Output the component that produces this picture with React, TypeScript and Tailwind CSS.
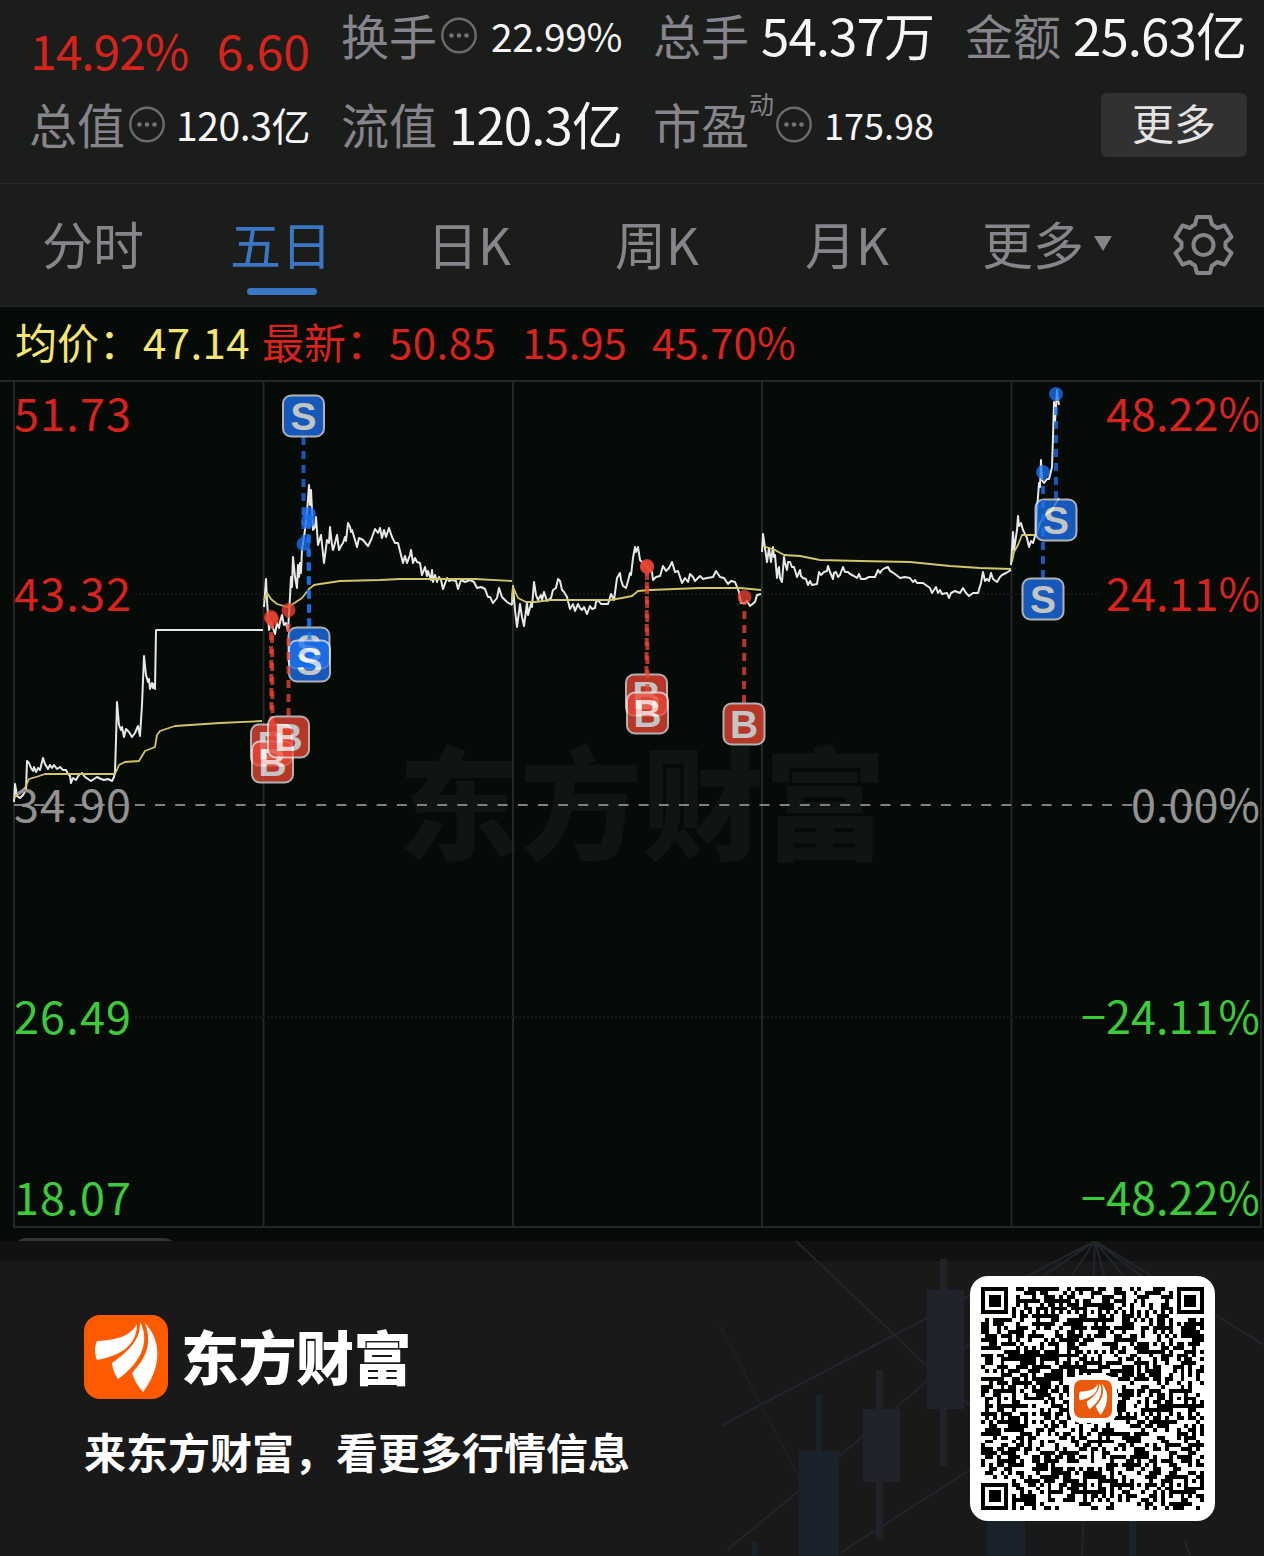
/**
 * Stock detail share card: quote header, period tabs, five-day price chart
 * with buy / sell marks, and the brand footer with a QR code.
 */

import React from 'react';

type Tone = 'blue' | 'red';

interface TradeMark {
  x: number;
  y: number;
  dotX: number;
  dotY: number;
  tone: Tone;
}

const TONES: Record<Tone, { fill: string; letter: string }> = {
  blue: { fill: '#1b72f2', letter: 'S' },
  red: { fill: '#ee4433', letter: 'B' },
};

const PRICE_LINES = [
  '14,802 15,784 17,796 20,798 23,795 26,790 27,761 29,763 31,768 33,771 34,767 36,772 38,768 40,770 43,758 45,764 48,769 50,765 52,768 54,765 57,769 60,767 63,770 66,770 68,774 70,776 71,783 73,778 76,780 79,775 82,773 85,777 88,779 91,781 94,779 97,777 101,779 104,780 108,779 112,781 114,777 115,772 116,740 117,702 119,725 121,730 122,727 124,737 126,729 129,732 132,737 135,733 138,726 140,736 142,705 144,656 146,675 148,682 149,679 150,689 152,683 153,688 154,684 155,689 156,630 263,630',
  '264,607 266,579 267,600 269,630 271,622 275,634 277,623 279,628 280,622 282,615 284,625 286,623 288,631 290,597 291,577 292,587 293,557 295,577 297,588 298,565 299,577 300,563 301,573 302,550 305,530 307,513 309,485 310,505 311,490 313,530 315,527 316,517 318,545 321,535 324,563 327,540 329,543 330,527 332,545 333,550 335,543 337,535 339,550 341,546 343,543 345,537 346,541 348,523 350,527 351,532 352,530 355,540 357,547 359,538 363,540 368,546 371,540 375,529 378,533 380,528 382,538 384,530 386,537 389,528 392,537 395,543 398,543 401,555 403,563 405,556 407,563 410,555 411,550 413,563 415,558 417,562 420,563 422,575 425,567 427,576 428,571 431,580 432,570 433,582 435,575 437,582 439,577 441,580 443,589 447,578 449,581 452,580 456,581 458,589 461,580 465,582 470,580 474,582 477,588 481,587 485,589 488,597 490,597 493,603 497,598 499,588 502,597 507,602 512,605',
  '512,605 513,586 515,610 517,627 520,604 522,617 524,626 527,603 528,615 531,604 532,607 534,582 536,595 538,600 541,595 542,600 544,592 547,601 551,598 553,590 556,588 558,579 560,581 562,590 564,592 567,597 570,609 573,604 575,611 578,604 580,608 582,610 584,607 587,614 590,606 592,609 595,608 596,602 598,600 601,604 608,604 611,594 614,600 617,578 620,573 621,580 623,586 626,588 628,581 630,573 631,575 633,558 635,547 636,552 638,547 640,560 647,567 652,572 653,580 656,577 660,576 663,566 666,571 669,568 672,562 675,572 678,571 682,583 685,578 688,582 690,574 693,577 695,581 700,576 703,579 707,578 713,577 716,571 720,577 724,578 728,584 731,581 735,582 739,592 741,603 745,603 747,601 750,606 755,602 757,595 761,594',
  '762,552 763,534 767,562 769,548 771,562 773,547 774,557 775,555 777,578 778,570 779,567 780,578 782,582 784,557 785,563 787,570 788,562 790,562 792,567 794,567 797,577 800,570 801,576 803,578 806,579 808,585 810,581 812,585 817,584 819,572 821,575 824,572 827,571 828,566 830,572 833,579 834,573 836,572 838,577 840,575 843,567 845,572 848,572 850,574 854,576 857,578 859,574 861,579 865,579 869,577 875,577 878,570 880,573 882,570 885,568 888,567 890,571 892,572 895,574 900,578 905,577 910,578 913,582 915,580 917,583 923,583 930,588 932,593 934,590 936,587 938,593 940,590 942,594 947,593 949,598 951,593 955,591 960,593 963,588 966,593 969,596 973,593 978,593 981,583 983,572 985,581 987,579 989,581 991,573 993,579 997,582 1000,577 1002,575 1006,573 1011,570',
  '1011,565 1013,532 1014,550 1017,530 1018,516 1019,526 1021,523 1023,530 1025,534 1027,538 1029,547 1031,541 1033,543 1036,533 1037,510 1039,483 1040,487 1041,460 1042,480 1044,483 1047,479 1049,479 1052,467 1053,437 1054,402 1055,422 1057,390 1058,400 1059,405',
];

const AVERAGE_LINES = [
  '14,798 20,792 25,788 29,779 36,777 45,774 115,774 119,765 125,762 139,761 145,751 155,747 157,735 160,731 166,729 175,726 190,725 220,723 262,721',
  '264,600 267,593 271,599 277,604 287,607 293,604 302,598 309,589 314,585 320,584 340,581 380,580 400,579 475,579 512,581',
  '512,600 513,587 518,598 526,602 535,602 550,600 570,600 610,600 622,598 632,596 638,591 650,590 700,588 740,588 761,590',
  '763,546 775,550 784,555 800,556 820,560 860,561 910,562 950,566 980,568 1011,569',
  '1012,562 1014,552 1018,545 1022,535 1036,535 1040,523 1045,515 1052,510 1056,503 1059,498',
];

const MARKS: TradeMark[] = [
  { x: 303.5, y: 416, dotX: 303.5, dotY: 544, tone: 'blue' },
  { x: 309, y: 648, dotX: 309, dotY: 514, tone: 'blue' },
  { x: 309.5, y: 661, dotX: 308, dotY: 521, tone: 'blue' },
  { x: 271.5, y: 745, dotX: 271, dotY: 617, tone: 'red' },
  { x: 272.5, y: 762, dotX: 272, dotY: 619, tone: 'red' },
  { x: 288.5, y: 737, dotX: 288.5, dotY: 610, tone: 'red' },
  { x: 646.5, y: 695, dotX: 647, dotY: 566, tone: 'red' },
  { x: 647.5, y: 713, dotX: 647, dotY: 567, tone: 'red' },
  { x: 744, y: 724, dotX: 744.5, dotY: 597, tone: 'red' },
  { x: 1056, y: 520, dotX: 1056, dotY: 394, tone: 'blue' },
  { x: 1043, y: 599, dotX: 1043, dotY: 472, tone: 'blue' },
];

const AXIS_LABELS = [
  { y: 431, price: '51.73', percent: '48.22%', start: 1106, color: '#d8231d' },
  { y: 611, price: '43.32', percent: '24.11%', start: 1106, color: '#d8231d' },
  { y: 822, price: '34.90', percent: '0.00%', start: 1131, color: '#929292' },
  { y: 1034, price: '26.49', percent: '−24.11%', start: 1081, color: '#3cc93a' },
  { y: 1215, price: '18.07', percent: '−48.22%', start: 1081, color: '#3cc93a' },
];

const QR_SIZE = 57;

// Finder and alignment squares are fixed; the data area comes from a seeded generator
function buildQrPath() {
  const ring = (dx: number, dy: number, outer: number) => {
    const d = Math.max(Math.abs(dx), Math.abs(dy));
    return outer === 3 ? d !== 2 && d !== 4 : d !== 1;
  };
  const finders = [[3, 3], [53, 3], [3, 53]];
  const aligns = [[28, 6], [6, 28], [50, 28], [28, 50], [50, 50]];
  let seed = 20231;
  let path = '';
  for (let y = 0; y < QR_SIZE; y++) {
    for (let x = 0; x < QR_SIZE; x++) {
      seed = (seed * 48271) % 2147483647;
      let on = (seed >> 12) % 100 < 51;
      if (y === 6 || x === 6) on = (x + y) % 2 === 0;
      aligns.forEach(([cx, cy]) => {
        if (Math.abs(x - cx) <= 2 && Math.abs(y - cy) <= 2) on = ring(x - cx, y - cy, 2);
      });
      finders.forEach(([cx, cy]) => {
        if (Math.abs(x - cx) <= 4 && Math.abs(y - cy) <= 4) on = ring(x - cx, y - cy, 3);
      });
      if (on) path += `M${x} ${y}h1v1h-1z`;
    }
  }
  return path;
}

const QR_PATH = buildQrPath();

const DotsIcon: React.FC = () => (
  <svg className="h-[38px] w-[38px] shrink-0" viewBox="0 0 38 38" fill="none">
    <circle cx="19" cy="19.500" r="16.7" stroke="#6b6c6a" strokeWidth="2.4" />
    <g fill="#747573">
      <circle cx="11.5" cy="19.500" r="2.3" />
      <circle cx="19" cy="19.500" r="2.3" />
      <circle cx="26.5" cy="19.500" r="2.3" />
    </g>
  </svg>
);

const GearIcon: React.FC = () => (
  <svg className="h-[64px] w-[64px]" viewBox="-32.500 -32 64 64" fill="none" stroke="#85858b" strokeWidth="4" strokeLinejoin="round">
    <path d="M-6.500-28H6.500L8.500-20.500Q11.500-19 13.500-17L21-19.500L28-8L22-2.500V2.500L28 8L21 19.500L13.500 17Q11.500 19 8.500 20.500L6.500 28H-6.500L-8.500 20.500Q-11.500 19-13.500 17L-21 19.500L-28 8L-22 2.500V-2.500L-28-8L-21-19.500L-13.500-17Q-11.500-19-8.500-20.500Z" />
    <circle r="10" />
  </svg>
);

const BrandIcon: React.FC<{ className: string; color: string }> = ({ className, color }) => (
  <svg className={className} viewBox="0 0 84 84">
    <rect width="84" height="84" rx="16" fill={color} />
    <g fill="#fff">
      <path d="M53 9C46 21 34 25 13 26Q9 35 13 45C34 41 53 32 53 9Z" />
      <path d="M56 7C57 24 45 36 28 48Q29 57 34 64C53 51 68 29 56 7Z" />
      <path d="M61 8C69 30 61 44 48 58Q51 68 59 77C73 59 82 31 61 8Z" />
    </g>
  </svg>
);

interface StatProps {
  label: string;
  value: string;
  sup?: string;
  info?: boolean;
  valueClass: string;
}

const Stat: React.FC<StatProps> = ({ label, value, sup, info, valueClass }) => (
  <div className="flex items-center justify-between whitespace-nowrap">
    <div className="flex items-center text-[48px] text-[#85858b]">
      <span className="pb-[3px]">{label}</span>
      {sup && <sup className="-top-2 -mr-0.5 self-start text-[25px] leading-none">{sup}</sup>}
      {info && <span className="ml-[3px]"><DotsIcon /></span>}
    </div>
    <span className={valueClass}>{value}</span>
  </div>
);

const BIG_VALUE = 'pb-0.5 text-[51px] tracking-[-0.9px] text-[#f6f6f6]';
const SMALL_VALUE = 'text-[39px] tracking-[-0.4px] text-[#f6f6f6]';

const QuoteHeader: React.FC = () => (
  <header className="h-[184px] border-b border-[#262826] pl-[29px] leading-none">
    <div className="grid grid-cols-[281px_281px_281px_281px] grid-rows-[70px_108px] gap-x-[31px]">
      <div className="flex items-center justify-between pt-7 pl-px text-[48px] text-[#d8231d]">
        <span className="tracking-[-1px]">14.92%</span>
        <span>6.60</span>
      </div>
      <Stat label="换手" info value="22.99%" valueClass={SMALL_VALUE} />
      <Stat label="总手" value="54.37万" valueClass={BIG_VALUE} />
      <Stat label="金额" value="25.63亿" valueClass={BIG_VALUE} />
      <Stat label="总值" info value="120.3亿" valueClass={SMALL_VALUE} />
      <Stat label="流值" value="120.3亿" valueClass={BIG_VALUE} />
      <Stat label="市盈" sup="动" info value="175.98" valueClass="text-[36px] text-[#f6f6f6]" />
      <div className="flex items-center justify-end pt-0.5">
        <button className="-mr-px h-[64px] w-[146px] rounded-md bg-[#313131] pb-[7px] text-[42px] leading-none text-[#e4e4e4]">更多</button>
      </div>
    </div>
  </header>
);

const PeriodTabs: React.FC = () => (
  <nav className="grid h-[123px] grid-cols-[188px_197px_188px_190px_177px_189px_1fr] items-center border-b border-[#222522] pl-[42px] text-[51px] leading-none text-[#85858b]">
    <span className="pb-[3px]">分时</span>
    <span className="relative pb-[3px] text-[#3a76c4]">
      五日
      <i className="absolute top-[70px] left-[17px] h-[7px] w-[70px] rounded-full bg-[#3a76c4]" />
    </span>
    <span className="pb-[3px]">日K</span>
    <span className="pb-[3px]">周K</span>
    <span className="pb-[3px]">月K</span>
    <span className="flex items-center pb-[3px]">
      更多
      <i className="ml-2.5 border-x-[9px] border-t-[15px] border-x-transparent border-t-[#85858b]" />
    </span>
    <GearIcon />
  </nav>
);

const PriceSummary: React.FC = () => (
  <div className="grid h-[73px] grid-cols-[128px_119px_127px_133px_130px_1fr] items-center bg-[#070b08] pb-[5px] pl-[15px] text-[42px] leading-none whitespace-nowrap text-[#d8231d]">
    <span className="text-[#f5e670]">均价：</span>
    <span className="tracking-[0.4px] text-[#f5e670]">47.14</span>
    <span>最新：</span>
    <span className="tracking-[0.5px]">50.85</span>
    <span>15.95</span>
    <span>45.70%</span>
  </div>
);

const Mark: React.FC<{ mark: TradeMark }> = ({ mark }) => {
  const { fill, letter } = TONES[mark.tone];
  const edge = mark.y < mark.dotY ? mark.y + 21 : mark.y - 21;
  return (
    <g opacity="0.76">
      <line x1={mark.x} y1={edge} x2={mark.dotX} y2={mark.dotY} stroke={fill} strokeWidth="4" strokeDasharray="8 6" />
      <circle cx={mark.dotX} cy={mark.dotY} r="7" fill={fill} />
      <rect x={mark.x - 20.5} y={mark.y - 20.5} width="41" height="41" rx="8" fill={fill} stroke="#e6e6ea" strokeWidth="2" />
      <text x={mark.x} y={mark.y + 14} textAnchor="middle" fontSize="39" fontWeight="700" fontFamily="Liberation Sans, sans-serif" fill="#fff">{letter}</text>
    </g>
  );
};

const FiveDayChart: React.FC = () => (
  <svg className="block h-[861px] w-full bg-[#070b08]" viewBox="0 380 1264 861">
    <text x="398" y="850" fontSize="122" fontWeight="900" fill="#101512" textLength="488">东方财富</text>
    <g stroke="#242725" strokeWidth="2" fill="none">
      <path d="M0 381H1264M14 381V1227H1261V381M263.500 381V1227M513 381V1227M762 381V1227M1011.500 381V1227" />
      <path d="M135 594H1100M135 1017H1080" stroke="#151916" strokeDasharray="2 2" />
    </g>
    <g fill="none" strokeLinejoin="round">
      {PRICE_LINES.map((points) => (
        <polyline key={points} points={points} stroke="#e8e8e8" strokeWidth="2" />
      ))}
      {AVERAGE_LINES.map((points) => (
        <polyline key={points} points={points} stroke="#d2c764" strokeWidth="1.8" />
      ))}
    </g>
    <path d="M14 805H1262" stroke="#7f807f" strokeWidth="2" strokeDasharray="10 10.150" />
    {MARKS.map((mark) => (
      <Mark key={`${mark.x}-${mark.y}`} mark={mark} />
    ))}
    {AXIS_LABELS.map((label) => (
      <g key={label.y} fill={label.color} fontSize="45">
        <text x="14" y={label.y} textLength="117">{label.price}</text>
        <text x={label.start} y={label.y} textLength={1260 - label.start}>{label.percent}</text>
      </g>
    ))}
    <path d="M18 1241Q21 1238 28 1238H162Q169 1238 172 1241Z" fill="#333534" />
  </svg>
);

const FooterBackdrop: React.FC = () => (
  <svg className="absolute inset-0 h-full w-full" viewBox="0 1241 1264 315">
    <rect y="1241" width="1264" height="20" fill="#101110" />
    <g stroke="#20262d" strokeWidth="2" fill="none">
      <path d="M796 1241L927 1366L1050 1480M722 1425L927 1318L980 1290M727 1550L800 1490L927 1381L980 1335M840 1553L970 1470" />
      <path d="M720 1326L800 1480" stroke="#1c2025" />
      <path d="M1095 1241L1000 1290M1095 1241L1030 1285M1095 1241L1062 1290M1095 1241L1082 1556M1095 1241L1108 1290M1095 1241L1135 1290M1095 1241L1160 1290M1095 1241L1264 1345M1185 1541L1190 1556" />
    </g>
    <g fill="#20242a">
      <path d="M927 1290h37v119h-37zM940 1259h7v207h-7zM863 1409h37v73h-37zM876 1370h7v169h-7z" />
      <path d="M799 1451h40v105h-40zM816 1395h6v60h-6zM752 1542h5v14h-5zM987 1500h38v56h-38zM1129 1510h7v46h-7z" fill="#1a222c" />
    </g>
  </svg>
);

const BrandFooter: React.FC = () => (
  <footer className="relative h-[315px] bg-[#191919] text-white">
    <FooterBackdrop />
    <div className="relative flex justify-between pr-[49px] pl-[84px]">
      <div className="pt-[74px] leading-none">
        <div className="flex items-center gap-[13px]">
          <BrandIcon className="h-[84px] w-[84px]" color="#ff5a00" />
          <span className="pb-1 text-[58px] font-black tracking-[-0.5px]">东方财富</span>
        </div>
        <p className="mt-[31px] text-[42px] font-bold whitespace-nowrap">来东方财富，看更多行情信息</p>
      </div>
      <div className="mt-[35px] grid h-[245px] w-[245px] place-items-center rounded-[18px] bg-white">
        <svg className="col-start-1 row-start-1 h-[223px] w-[223px]" viewBox="0 0 57 57" shapeRendering="crispEdges">
          <path d={QR_PATH} fill="#000" />
        </svg>
        <div className="z-10 col-start-1 row-start-1 grid h-[48px] w-[48px] place-items-center rounded-xl bg-white">
          <BrandIcon className="h-[38px] w-[38px]" color="#e85a0c" />
        </div>
      </div>
    </div>
  </footer>
);

export default function App() {
  return (
    <main className="w-[1264px] overflow-hidden bg-[#1b1d1b] font-['Noto_Sans_CJK_SC',sans-serif]">
      <QuoteHeader />
      <PeriodTabs />
      <PriceSummary />
      <FiveDayChart />
      <BrandFooter />
    </main>
  );
}
